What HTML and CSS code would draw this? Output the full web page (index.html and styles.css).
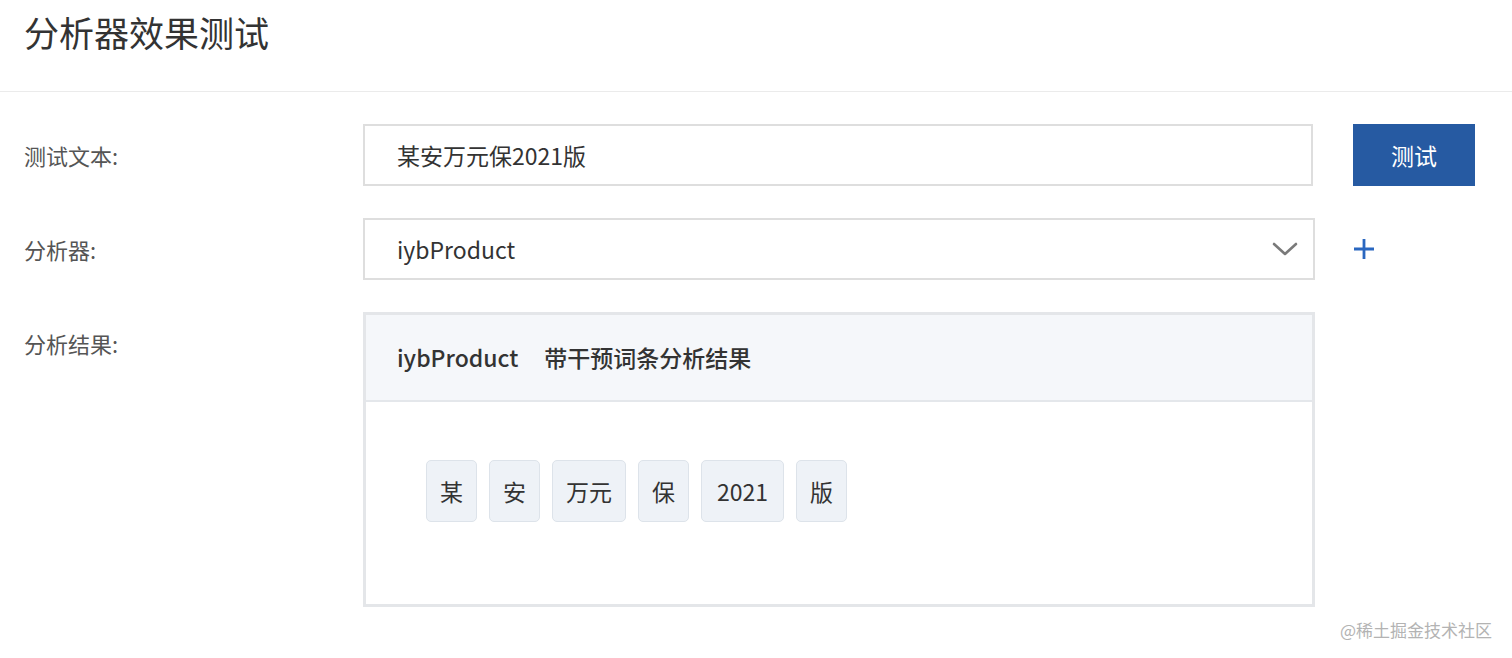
FILE: index.html
```html
<!DOCTYPE html>
<html lang="zh-CN">
<head>
<meta charset="utf-8">
<title>分析器效果测试</title>
<link rel="stylesheet" href="styles.css">
</head>
<body>
<div class="page">
  <header class="page-header">
    <h1 class="page-title">分析器效果测试</h1>
  </header>
  <main class="form">
    <div class="form-row">
      <label class="form-label">测试文本:</label>
      <div class="form-control">
        <div class="text-input">某安万元保2021版</div>
      </div>
      <button class="btn-primary">测试</button>
    </div>
    <div class="form-row">
      <label class="form-label">分析器:</label>
      <div class="form-control">
        <div class="select">
          <span class="select-value">iybProduct</span>
          <svg class="select-arrow" width="26" height="16" viewBox="0 0 26 16"><path d="M2 3 L13 13 L24 3" fill="none" stroke="#7a7a7a" stroke-width="2.6" stroke-linecap="round" stroke-linejoin="round"/></svg>
        </div>
      </div>
      <button class="btn-add" aria-label="添加">
        <svg width="22" height="22" viewBox="0 0 22 22"><path d="M11 1 V21 M1 11 H21" stroke="#2a67c0" stroke-width="2.8" fill="none"/></svg>
      </button>
    </div>
    <div class="form-row">
      <label class="form-label">分析结果:</label>
      <div class="form-control">
        <div class="result">
          <div class="result-header">
            <span class="result-name">iybProduct</span>
            <span class="result-desc">带干预词条分析结果</span>
          </div>
          <div class="result-body">
            <span class="token">某</span>
            <span class="token">安</span>
            <span class="token">万元</span>
            <span class="token">保</span>
            <span class="token token-num">2021</span>
            <span class="token">版</span>
          </div>
        </div>
      </div>
    </div>
  </main>
  <div class="watermark">@稀土掘金技术社区</div>
</div>
</body>
</html>
```

FILE: styles.css
```css
* { box-sizing: border-box; }
html, body {
  margin: 0;
  padding: 0;
  background: #fff;
}
body {
  font-family: "Noto Sans CJK SC", "Noto Sans", sans-serif;
  color: #333;
}
.page {
  position: relative;
  width: 1512px;
  height: 658px;
  overflow: hidden;
}
.page-header {
  height: 92px;
  border-bottom: 1px solid #ebebeb;
  padding: 10px 0 0 24px;
}
.page-title {
  margin: 0;
  font-size: 35px;
  line-height: 44px;
  font-weight: 400;
  color: #333;
}
.form {
  padding: 32px 0 0 24px;
  display: flex;
  flex-direction: column;
  gap: 32px;
}
.form-row {
  display: flex;
  align-items: flex-start;
}
.form-label {
  width: 339px;
  height: 62px;
  flex: none;
  font-size: 22px;
  line-height: 62px;
  color: #555;
}
.form-control {
  width: 952px;
  flex: none;
}
.text-input {
  width: 950px;
  height: 62px;
  border: 2px solid #dedede;
  padding: 0 0 0 32px;
  font-size: 23px;
  line-height: 58px;
  color: #333;
}
.btn-primary {
  margin-left: 38px;
  width: 122px;
  height: 62px;
  border: none;
  background: #265aa2;
  color: #fff;
  font-family: inherit;
  font-size: 23px;
  line-height: 62px;
  padding: 0;
}
.select {
  height: 62px;
  border: 2px solid #dedede;
  display: flex;
  align-items: center;
  justify-content: space-between;
  padding: 0 15px 0 32px;
}
.select-value {
  font-size: 23px;
  line-height: 30px;
  color: #333;
}
.select-arrow {
  display: block;
}
.btn-add {
  margin-left: 37px;
  width: 24px;
  height: 62px;
  border: none;
  background: none;
  padding: 0;
  display: flex;
  align-items: center;
  justify-content: center;
}
.result {
  border: 3px solid #e4e6e9;
  height: 295px;
  display: flex;
  flex-direction: column;
}
.result-header {
  height: 87px;
  flex: none;
  background: #f5f7fa;
  border-bottom: 2px solid #e4e7eb;
  padding: 0 0 2px 31px;
  display: flex;
  align-items: center;
  gap: 26px;
  font-size: 23px;
  line-height: 30px;
  font-weight: 500;
  color: #333;
}
.result-body {
  flex: 1;
  padding: 58px 0 0 60px;
  display: flex;
  align-items: flex-start;
  gap: 12px;
}
.token {
  height: 62px;
  padding: 0 13px;
  border: 1px solid #dde3ea;
  border-radius: 5px;
  background: #eef2f7;
  font-size: 23px;
  line-height: 60px;
  color: #333;
}
.token-num {
  padding: 0 15px;
}
.watermark {
  position: absolute;
  right: 20px;
  top: 618px;
  font-size: 17px;
  line-height: 24px;
  color: #b3b3b3;
}
```
